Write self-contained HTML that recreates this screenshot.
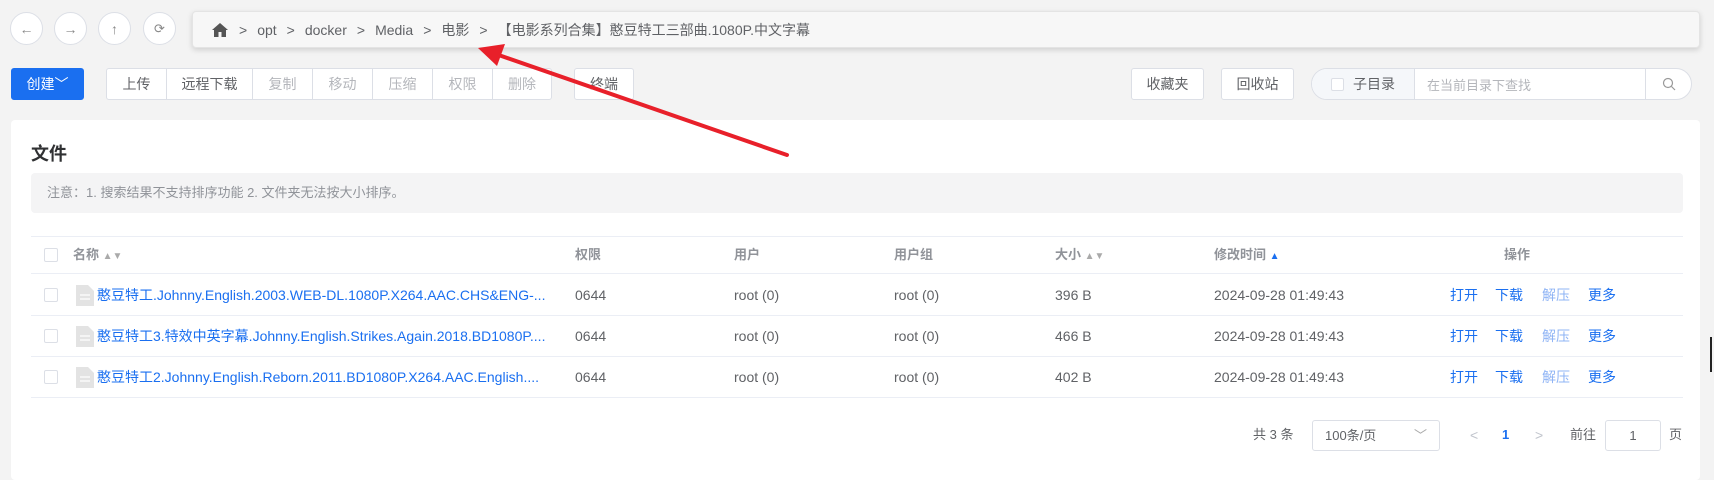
<!DOCTYPE html>
<html><head><meta charset="utf-8"><style>
*{box-sizing:border-box;margin:0;padding:0}
body{width:1714px;height:462px;overflow:hidden;background:#f3f3f3;font-family:"Liberation Sans","Noto Sans CJK SC",sans-serif;font-size:14px;color:#606266;position:relative}
.a{position:absolute}
.circ{position:absolute;width:33px;height:33px;border-radius:50%;background:#fff;border:1px solid #dcdfe6;top:12px;display:flex;align-items:center;justify-content:center;color:#888;font-size:14px}
.bc{left:192px;top:11px;width:1508px;height:37px;background:#f7f7f7;border:1px solid #e4e4e4;border-radius:4px;box-shadow:0 2px 6px rgba(0,0,0,.15);display:flex;align-items:center;padding-left:18px;font-size:14px;color:#606266}
.bc span{margin-right:10px}
.btn{position:absolute;top:68px;height:32px;background:#fff;border:1px solid #dcdfe6;display:flex;align-items:center;justify-content:center;font-size:14px;color:#606266}
.dis{color:#b4b6bb}
.card{left:11px;top:120px;width:1689px;height:360px;background:#fff;border-radius:4px}
.row{position:absolute;left:31px;width:1652px;border-bottom:1px solid #ebeef5}
.cb{position:absolute;left:44px;width:14px;height:14px;border:1px solid #dcdfe6;border-radius:2px;background:#fff}
.t{position:absolute;white-space:nowrap;line-height:20px;height:20px}
.lnk{color:#1a6ff0}
</style></head><body>
<div class="circ" style="left:10px">&#8592;</div>
<div class="circ" style="left:54px">&#8594;</div>
<div class="circ" style="left:98px">&#8593;</div>
<div class="circ" style="left:143px;font-size:13px">&#10227;</div>
<div class="a bc"><svg width="18" height="16" viewBox="0 0 18 16" style="margin-right:10px"><path d="M9 1L1 8h2v7h4.5v-5h3v5H15V8h2z" fill="#555"/></svg><span>&gt;</span><span>opt</span><span>&gt;</span><span>docker</span><span>&gt;</span><span>Media</span><span>&gt;</span><span>电影</span><span>&gt;</span><span>【电影系列合集】憨豆特工三部曲.1080P.中文字幕</span></div>

<div class="btn" style="left:11px;width:73px;background:#1a6ff0;border-color:#1a6ff0;color:#fff;border-radius:3px">创建﹀</div>
<div class="btn" style="left:106px;width:61px;border-radius:3px 0 0 3px">上传</div>
<div class="btn" style="left:166px;width:87px">远程下载</div>
<div class="btn dis" style="left:252px;width:61px">复制</div>
<div class="btn dis" style="left:312px;width:61px">移动</div>
<div class="btn dis" style="left:372px;width:61px">压缩</div>
<div class="btn dis" style="left:432px;width:61px">权限</div>
<div class="btn dis" style="left:492px;width:60px;border-radius:0 3px 3px 0">删除</div>
<div class="btn" style="left:574px;width:60px;border-radius:3px">终端</div>
<div class="btn" style="left:1131px;width:73px;border-radius:3px">收藏夹</div>
<div class="btn" style="left:1221px;width:73px;border-radius:3px">回收站</div>
<div class="btn" style="left:1311px;width:381px;border-radius:16px;justify-content:flex-start;overflow:hidden;padding:0">
 <div style="width:103px;height:100%;background:#f5f7fa;border-right:1px solid #dcdfe6;display:flex;align-items:center;padding-left:19px"><span style="width:13px;height:13px;border:1px solid #dcdfe6;background:#fff;border-radius:2px;margin-right:9px"></span>子目录</div>
 <div style="flex:1;padding-left:12px;color:#b4b6bb;font-size:13px">在当前目录下查找</div>
 <div style="width:46px;height:100%;border-left:1px solid #dcdfe6;display:flex;align-items:center;justify-content:center"><svg width="14" height="14" viewBox="0 0 14 14"><circle cx="6" cy="6" r="4.5" fill="none" stroke="#999" stroke-width="1.2"/><path d="M9.5 9.5L13 13" stroke="#999" stroke-width="1.2"/></svg></div>
</div>

<div class="a card"></div>
<div class="t" style="left:31px;top:143px;font-size:18px;font-weight:bold;color:#303133;line-height:22px;height:22px">文件</div>
<div class="a" style="left:31px;top:173px;width:1652px;height:40px;background:#f4f4f5;border-radius:4px;color:#909399;font-size:13px;line-height:40px;padding-left:16px">注意：1. 搜索结果不支持排序功能 2. 文件夹无法按大小排序。</div>

<div class="row" style="top:236px;height:38px;border-top:1px solid #ebeef5"></div>
<div class="row" style="top:274px;height:42px"></div>
<div class="row" style="top:316px;height:41px"></div>
<div class="row" style="top:357px;height:41px"></div>

<div class="cb" style="top:248px"></div>
<div class="t" style="top:245px;left:73px;font-weight:bold;color:#909399;font-size:13px">名称 <span style="font-size:10px;color:#aaa">&#9650;&#9660;</span></div>
<div class="t" style="top:245px;left:575px;font-weight:bold;color:#909399;font-size:13px">权限</div>
<div class="t" style="top:245px;left:734px;font-weight:bold;color:#909399;font-size:13px">用户</div>
<div class="t" style="top:245px;left:894px;font-weight:bold;color:#909399;font-size:13px">用户组</div>
<div class="t" style="top:245px;left:1055px;font-weight:bold;color:#909399;font-size:13px">大小 <span style="font-size:10px;color:#aaa">&#9650;&#9660;</span></div>
<div class="t" style="top:245px;left:1214px;font-weight:bold;color:#909399;font-size:13px">修改时间 <span style="font-size:10px;color:#1a6ff0">&#9650;</span></div>
<div class="t" style="top:245px;left:1504px;font-weight:bold;color:#909399;font-size:13px">操作</div>

<div class="cb" style="top:288px"></div>
<svg class="a" style="left:76px;top:285px" width="18" height="21"><path d="M0 0h12l6 6v15H0z" fill="#e3e3e3"/><path d="M4 10h10M4 14h10" stroke="#fff" stroke-width="1.3"/></svg>
<div class="t lnk" style="left:97px;top:285px">憨豆特工.Johnny.English.2003.WEB-DL.1080P.X264.AAC.CHS&amp;ENG-...</div>
<div class="cb" style="top:329px"></div>
<svg class="a" style="left:76px;top:326px" width="18" height="21"><path d="M0 0h12l6 6v15H0z" fill="#e3e3e3"/><path d="M4 10h10M4 14h10" stroke="#fff" stroke-width="1.3"/></svg>
<div class="t lnk" style="left:97px;top:326px">憨豆特工3.特效中英字幕.Johnny.English.Strikes.Again.2018.BD1080P....</div>
<div class="cb" style="top:370px"></div>
<svg class="a" style="left:76px;top:367px" width="18" height="21"><path d="M0 0h12l6 6v15H0z" fill="#e3e3e3"/><path d="M4 10h10M4 14h10" stroke="#fff" stroke-width="1.3"/></svg>
<div class="t lnk" style="left:97px;top:367px">憨豆特工2.Johnny.English.Reborn.2011.BD1080P.X264.AAC.English....</div>

<div class="t" style="left:575px;top:285px">0644</div><div class="t" style="left:734px;top:285px">root (0)</div><div class="t" style="left:894px;top:285px">root (0)</div><div class="t" style="left:1055px;top:285px">396 B</div><div class="t" style="left:1214px;top:285px">2024-09-28 01:49:43</div>
<div class="t" style="left:575px;top:326px">0644</div><div class="t" style="left:734px;top:326px">root (0)</div><div class="t" style="left:894px;top:326px">root (0)</div><div class="t" style="left:1055px;top:326px">466 B</div><div class="t" style="left:1214px;top:326px">2024-09-28 01:49:43</div>
<div class="t" style="left:575px;top:367px">0644</div><div class="t" style="left:734px;top:367px">root (0)</div><div class="t" style="left:894px;top:367px">root (0)</div><div class="t" style="left:1055px;top:367px">402 B</div><div class="t" style="left:1214px;top:367px">2024-09-28 01:49:43</div>

<div class="t lnk" style="left:1450px;top:285px">打开</div><div class="t lnk" style="left:1495px;top:285px">下载</div><div class="t" style="left:1542px;top:285px;color:#8fb4f5">解压</div><div class="t lnk" style="left:1588px;top:285px">更多</div>
<div class="t lnk" style="left:1450px;top:326px">打开</div><div class="t lnk" style="left:1495px;top:326px">下载</div><div class="t" style="left:1542px;top:326px;color:#8fb4f5">解压</div><div class="t lnk" style="left:1588px;top:326px">更多</div>
<div class="t lnk" style="left:1450px;top:367px">打开</div><div class="t lnk" style="left:1495px;top:367px">下载</div><div class="t" style="left:1542px;top:367px;color:#8fb4f5">解压</div><div class="t lnk" style="left:1588px;top:367px">更多</div>

<div class="t" style="left:1253px;top:425px;font-size:13px">共 3 条</div>
<div class="a" style="left:1312px;top:420px;width:128px;height:31px;border:1px solid #dcdfe6;border-radius:3px;padding-left:12px;line-height:29px;font-size:13px">100条/页<span style="position:absolute;right:12px;top:0;color:#aaa">﹀</span></div>
<div class="t" style="left:1470px;top:425px;color:#c0c4cc">&lt;</div>
<div class="t" style="left:1502px;top:425px;color:#1a6ff0;font-weight:bold;font-size:13px">1</div>
<div class="t" style="left:1535px;top:425px;color:#c0c4cc">&gt;</div>
<div class="t" style="left:1570px;top:425px;font-size:13px">前往</div>
<div class="a" style="left:1605px;top:420px;width:56px;height:31px;border:1px solid #dcdfe6;border-radius:3px;text-align:center;line-height:29px;font-size:13px">1</div>
<div class="t" style="left:1669px;top:425px;font-size:13px">页</div>
<div class="a" style="left:1710px;top:337px;width:2px;height:35px;background:#222"></div>

<svg class="a" style="left:0;top:0" width="1714" height="462"><path d="M787 155L490 52" stroke="#e8202a" stroke-width="4" stroke-linecap="round"/><path d="M478 48L505 44L497 66z" fill="#e8202a"/></svg>
</body></html>
